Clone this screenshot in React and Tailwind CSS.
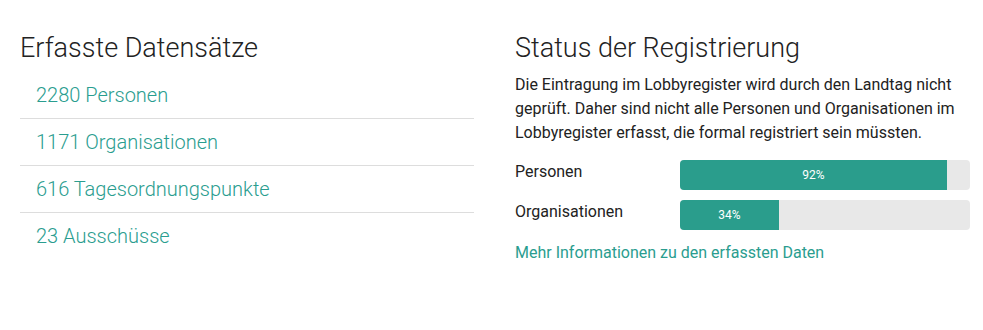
import React from "react";

const records = [
  "2280 Personen",
  "1171 Organisationen",
  "616 Tagesordnungspunkte",
  "23 Ausschüsse",
];

const status = [
  { label: "Personen", value: 92 },
  { label: "Organisationen", value: 34 },
];

const ProgressRow = ({ label, value }) => (
  <div className="flex items-start">
    <span className="w-[165px] shrink-0 text-[16px] leading-[24px] text-[#222]">{label}</span>
    <div className="flex h-[30px] flex-1 overflow-hidden rounded-[4px] bg-[#e8e8e8]">
      <div
        className="flex items-center justify-center bg-[#2a9d8c] text-[12px] text-white"
        style={{ width: `${value}%` }}
      >
        {value}%
      </div>
    </div>
  </div>
);

export default function App() {
  return (
    <div className="flex h-[330px] gap-[41px] bg-white pl-5 pt-[32px] font-['Roboto',sans-serif]">
      <div className="w-[454px] shrink-0">
        <h2 className="text-[27px] font-light leading-[32px] text-[#222]">Erfasste Datensätze</h2>
        <ul className="mt-[8px]">
          {records.map((r, i) => (
            <li
              key={r}
              className={`px-4 py-[11px] text-[20px] font-light leading-[24px] text-[#2a9d8f] ${
                i < records.length - 1 ? "border-b border-[#dddddd]" : ""
              }`}
            >
              <a href="#">{r}</a>
            </li>
          ))}
        </ul>
      </div>

      <div className="w-[455px] shrink-0">
        <h2 className="text-[27px] font-light leading-[32px] text-[#222]">Status der Registrierung</h2>
        <p className="mt-[9px] text-[16px] leading-[24px] text-[#222]">
          Die Eintragung im Lobbyregister wird durch den Landtag nicht geprüft. Daher sind nicht alle
          Personen und Organisationen im Lobbyregister erfasst, die formal registriert sein müssten.
        </p>
        <div className="mt-[15px] flex flex-col gap-[10px]">
          {status.map((s) => (
            <ProgressRow key={s.label} {...s} />
          ))}
        </div>
        <a href="#" className="mt-[11px] block text-[16px] leading-[24px] text-[#2a9d8f]">
          Mehr Informationen zu den erfassten Daten
        </a>
      </div>
    </div>
  );
}
